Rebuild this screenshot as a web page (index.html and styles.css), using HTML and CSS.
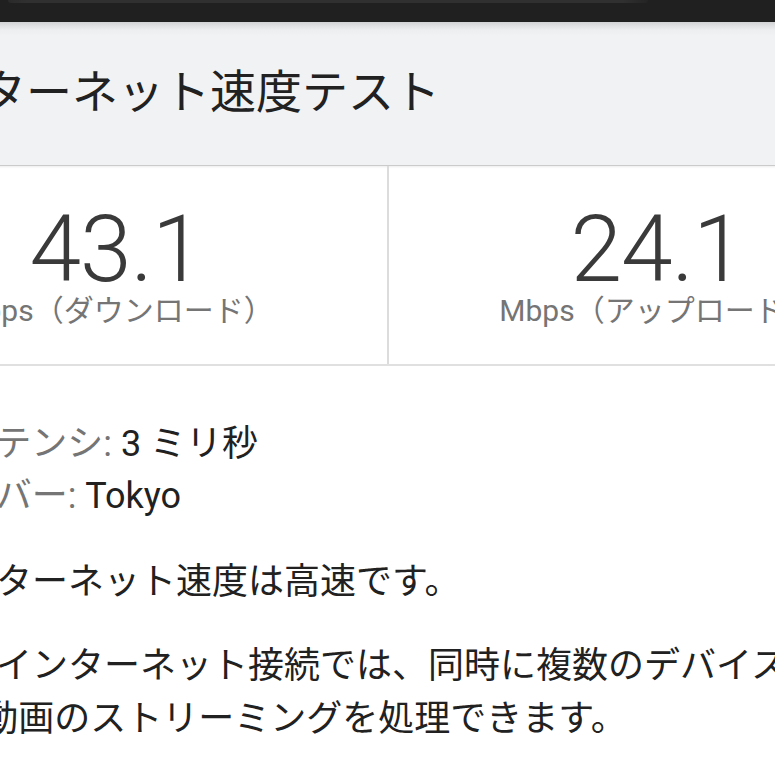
FILE: index.html
```html
<!DOCTYPE html>
<html lang="ja">
<head>
  <meta charset="UTF-8">
  <title>インターネット速度テスト</title>
  <link rel="stylesheet" href="styles.css">
</head>
<body>

  <div class="topbar">
    <div class="search"></div>
  </div>

  <div class="card">
    <div class="card-head">
      <h1>インターネット速度テスト</h1>
    </div>

    <div class="stats">
      <div class="stat">
        <div class="value">43.1</div>
        <div class="unit">Mbps（ダウンロード）</div>
      </div>
      <div class="stat">
        <div class="value">24.1</div>
        <div class="unit">Mbps（アップロード）</div>
      </div>
    </div>

    <div class="details">
      <div class="row"><span class="label">レイテンシ:</span> 3 ミリ秒</div>
      <div class="row"><span class="label">サーバー:</span> Tokyo</div>
      <p class="verdict">インターネット速度は高速です。</p>
      <p class="summary">このインターネット接続では、同時に複数のデバイスで HD 動画のストリーミングを処理できます。</p>
    </div>
  </div>

</body>
</html>
```

FILE: styles.css
```css
body {
  margin: 0;
  width: 775px;
  height: 775px;
  overflow: hidden;
  background-color: #fff;
  color: #212121;
  font-family: Roboto, "Noto Sans CJK JP", sans-serif;
}
.topbar {
  height: 22px;
  background-color: #202020;
}
.search {
  height: 3px;
  margin-left: 8px;
  width: 640px;
  background: linear-gradient(90deg, #2a2a2a, #303030 3%, #303030 96%, #242424);
  border-radius: 0 0 8px 8px;
}
.card {
  margin-left: -155px;
  width: 1080px;
}
.card-head {
  height: 144px;
  display: flex;
  align-items: center;
  padding: 0 0 12px 43px;
  box-sizing: border-box;
  background: linear-gradient(#d2d3d5, #eceef0 8px, #f1f2f4 14px);
  border-bottom: 1px solid #cbcbcb;
  box-shadow: 0 1px 2px rgba(0,0,0,0.08);
}
h1 {
  margin: 0;
  font-size: 46px;
  font-weight: 400;
  color: #212121;
}
.stats {
  display: grid;
  grid-template-columns: 544px 536px;
  height: 200px;
  box-sizing: border-box;
  border-bottom: 2px solid #e0e0e0;
}
.stat {
  text-align: center;
  padding-top: 37px;
}
.stat:first-child {
  border-right: 2px solid #dcdcdc;
}
.value {
  font-size: 93px;
  line-height: 93px;
  font-weight: 300;
  letter-spacing: -1px;
  color: #3a3a3a;
}
.unit {
  font-size: 30px;
  line-height: 30px;
  color: #757575;
}
.details {
  padding: 52px 0 0 79px;
  font-size: 36px;
  line-height: 52px;
}
.label {
  color: #757575;
}
.verdict {
  margin: 34px 0 0;
}
.summary {
  margin: 32px 0 0;
  width: 920px;
  line-height: 53px;
}
```
